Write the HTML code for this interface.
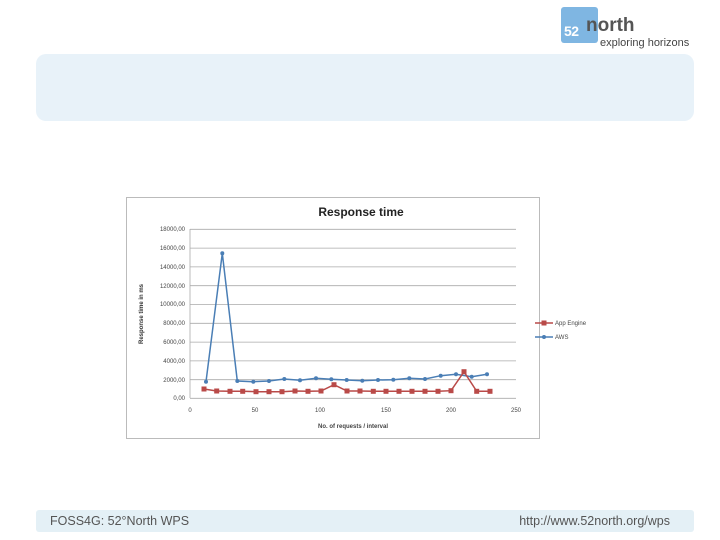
<!DOCTYPE html>
<html><head><meta charset="utf-8"><style>
body{margin:0;width:720px;height:540px;background:#fff;position:relative;overflow:hidden;font-family:"Liberation Sans",sans-serif}
.hdr{position:absolute;left:36px;top:54px;width:658px;height:67px;background:#e8f2f9;border-radius:10px}
.ftr{position:absolute;left:36px;top:510px;width:658px;height:22px;background:#e4f0f6;border-radius:3px;font-size:12.5px;color:#555;line-height:22px}
.logo{position:absolute;left:561px;top:7px;width:37px;height:36px;background:#7fb6e2;border-radius:3px}
</style></head><body>
<div class="logo"></div>
<div style="position:absolute;left:564px;top:23px;font-size:14px;color:#fff;letter-spacing:-0.5px;font-weight:bold">52</div>
<div style="position:absolute;left:586px;top:15px;font-size:19px;color:#555;font-weight:bold">north</div>
<div style="position:absolute;left:600px;top:37px;font-size:11px;color:#444">exploring horizons</div>
<div class="hdr"></div>
<svg style="position:absolute;left:0;top:0" width="720" height="540" viewBox="0 0 720 540" font-family="Liberation Sans,sans-serif">
<rect x="126.5" y="197.5" width="413" height="241" fill="#fff" stroke="#bbb"/>
<text x="361" y="216" font-size="12" font-weight="bold" text-anchor="middle" fill="#222">Response time</text>
<g stroke="#aaa" stroke-width="0.8">
<line x1="190" y1="229.3" x2="516" y2="229.3"/><line x1="190" y1="248.1" x2="516" y2="248.1"/><line x1="190" y1="266.9" x2="516" y2="266.9"/><line x1="190" y1="285.7" x2="516" y2="285.7"/><line x1="190" y1="304.5" x2="516" y2="304.5"/><line x1="190" y1="323.3" x2="516" y2="323.3"/><line x1="190" y1="342.1" x2="516" y2="342.1"/><line x1="190" y1="360.9" x2="516" y2="360.9"/><line x1="190" y1="379.7" x2="516" y2="379.7"/><line x1="190" y1="398.3" x2="516" y2="398.3"/><line x1="190" y1="229" x2="190" y2="398"/>
</g>
<g font-size="6" fill="#444" text-anchor="end">
<text x="185" y="231">18000,00</text><text x="185" y="250">16000,00</text><text x="185" y="269">14000,00</text><text x="185" y="288">12000,00</text><text x="185" y="306">10000,00</text><text x="185" y="325">8000,00</text><text x="185" y="344">6000,00</text><text x="185" y="363">4000,00</text><text x="185" y="382">2000,00</text><text x="185" y="400">0,00</text>
</g>
<g font-size="6" fill="#444" text-anchor="middle">
<text x="190" y="412">0</text><text x="255" y="412">50</text><text x="320" y="412">100</text><text x="386" y="412">150</text><text x="451" y="412">200</text><text x="516" y="412">250</text>
<text x="353" y="428" font-weight="bold">No. of requests / interval</text>
</g>
<text transform="translate(143,314) rotate(-90)" font-size="6" font-weight="bold" text-anchor="middle" fill="#333">Response time in ms</text>
<polyline fill="none" stroke="#4a7eb5" stroke-width="1.5" points="206,381.7 222.3,253.3 237.3,381 253.3,381.7 269,381 284.3,379 300,380.3 316,378.3 331.3,379.3 346.7,380 362.3,380.7 378,380 393.3,379.7 409.3,378.3 425,379 440.7,375.7 456,374.3 471.7,376.7 487,374.3"/>
<g fill="#4a7eb5">
<circle cx="206" cy="381.7" r="2"/><circle cx="222.3" cy="253.3" r="2"/><circle cx="237.3" cy="381" r="2"/><circle cx="253.3" cy="381.7" r="2"/><circle cx="269" cy="381" r="2"/><circle cx="284.3" cy="379" r="2"/><circle cx="300" cy="380.3" r="2"/><circle cx="316" cy="378.3" r="2"/><circle cx="331.3" cy="379.3" r="2"/><circle cx="346.7" cy="380" r="2"/><circle cx="362.3" cy="380.7" r="2"/><circle cx="378" cy="380" r="2"/><circle cx="393.3" cy="379.7" r="2"/><circle cx="409.3" cy="378.3" r="2"/><circle cx="425" cy="379" r="2"/><circle cx="440.7" cy="375.7" r="2"/><circle cx="456" cy="374.3" r="2"/><circle cx="471.7" cy="376.7" r="2"/><circle cx="487" cy="374.3" r="2"/>
</g>
<polyline fill="none" stroke="#b94a48" stroke-width="1.5" points="204,389 216.7,391 230,391.3 242.7,391.3 256,391.7 269,391.7 282,391.7 295,391 308,391.3 321,391 334,384.7 347,391 360,391 373.3,391.3 386,391.3 399,391.3 412,391.3 425,391.3 438,391.3 451,390.7 464,371.7 476.7,391.3 490,391.3"/>
<g fill="#b94a48">
<rect x="201.5" y="386.5" width="5" height="5"/><rect x="214.2" y="388.5" width="5" height="5"/><rect x="227.5" y="388.8" width="5" height="5"/><rect x="240.2" y="388.8" width="5" height="5"/><rect x="253.5" y="389.2" width="5" height="5"/><rect x="266.5" y="389.2" width="5" height="5"/><rect x="279.5" y="389.2" width="5" height="5"/><rect x="292.5" y="388.5" width="5" height="5"/><rect x="305.5" y="388.8" width="5" height="5"/><rect x="318.5" y="388.5" width="5" height="5"/><rect x="331.5" y="382.2" width="5" height="5"/><rect x="344.5" y="388.5" width="5" height="5"/><rect x="357.5" y="388.5" width="5" height="5"/><rect x="370.8" y="388.8" width="5" height="5"/><rect x="383.5" y="388.8" width="5" height="5"/><rect x="396.5" y="388.8" width="5" height="5"/><rect x="409.5" y="388.8" width="5" height="5"/><rect x="422.5" y="388.8" width="5" height="5"/><rect x="435.5" y="388.8" width="5" height="5"/><rect x="448.5" y="388.2" width="5" height="5"/><rect x="461.5" y="369.2" width="5" height="5"/><rect x="474.2" y="388.8" width="5" height="5"/><rect x="487.5" y="388.8" width="5" height="5"/>
</g>
<line x1="535" y1="323" x2="553" y2="323" stroke="#b94a48" stroke-width="1.5"/><rect x="541.5" y="320.5" width="5" height="5" fill="#b94a48"/>
<text x="555" y="325" font-size="6" fill="#444">App Engine</text>
<line x1="535" y1="337" x2="553" y2="337" stroke="#4a7eb5" stroke-width="1.5"/><circle cx="544" cy="337" r="2" fill="#4a7eb5"/>
<text x="555" y="339" font-size="6" fill="#444">AWS</text>
</svg>
<div class="ftr"><span style="position:absolute;left:14px">FOSS4G: 52°North WPS</span><span style="position:absolute;right:24px">http://www.52north.org/wps</span></div>
</body></html>
